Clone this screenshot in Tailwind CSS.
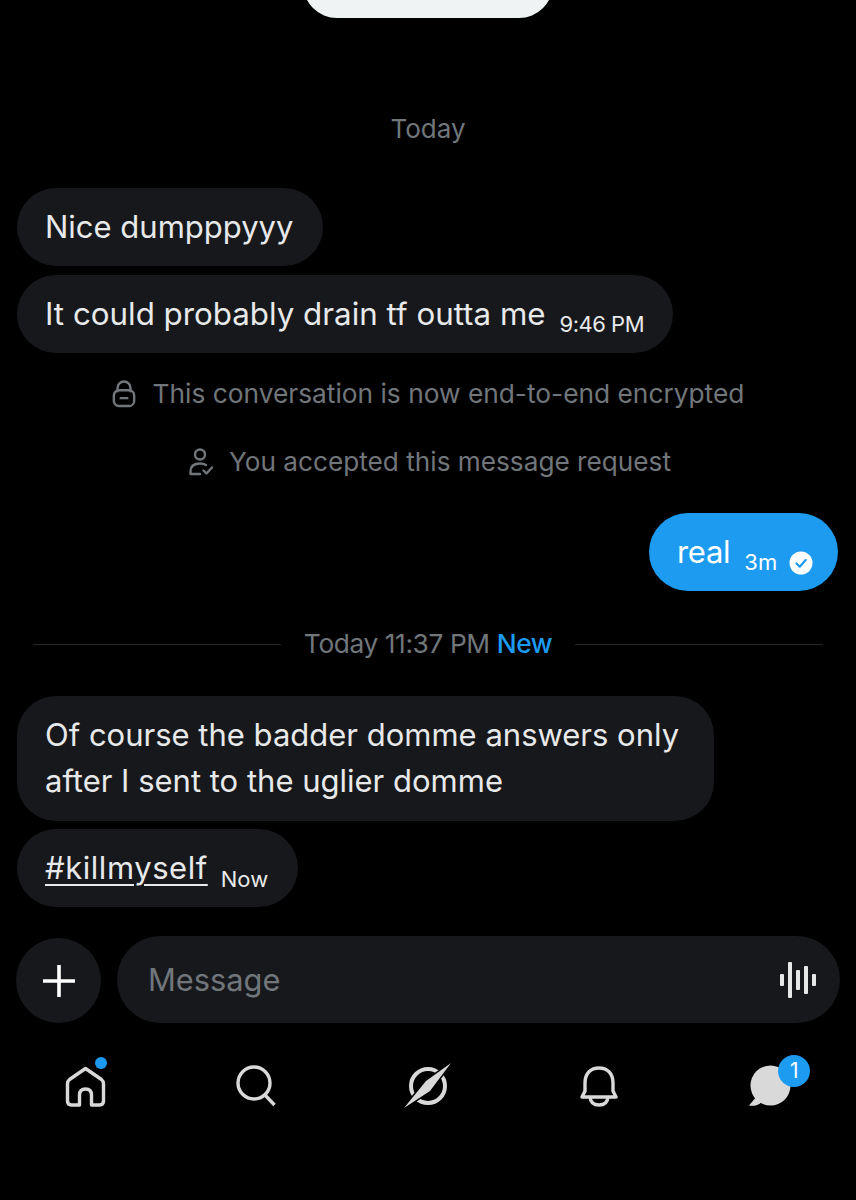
<!DOCTYPE html>
<html lang="en">
<head>
  <meta charset="UTF-8">
  <meta name="viewport" content="width=device-width, initial-scale=1.0">
  <title>Messages</title>
  <script src="https://cdn.jsdelivr.net/npm/@tailwindcss/browser@4"></script>
</head>
<body class="bg-black">
  <div class="w-[856px] h-[1200px] overflow-hidden flex flex-col font-['Inter','Liberation_Sans',sans-serif] text-[#e7e9ea]">
    <!-- Sheet peeking in at the top -->
    <div class="w-[250px] h-[60px] mt-[-42px] ml-[303px] shrink-0 bg-[#eff3f4] rounded-b-[34px]"></div>

    <!-- Conversation -->
    <div class="flex flex-col px-[17px] shrink-0">
      <p class="mt-[95px] h-[32px] leading-[32px] text-center text-[26px] text-[#71767b] mb-[-1px]">Today</p>

      <div class="mt-[44px] flex flex-col items-start gap-[9px]">
        <div class="h-[78px] w-[306px] flex items-center pl-[28px] pt-[1px] rounded-[39px] bg-[#17181b] text-[31px]">Nice dumpppyyy</div>
        <div class="h-[78px] w-[656px] flex items-center pl-[28px] pt-[1px] rounded-[39px] bg-[#17181b] text-[31.300px]">
          <span>It could probably drain tf outta me</span>
          <span class="ml-[14px] mt-[20px] text-[22px] tracking-[-0.5px] whitespace-nowrap">9:46 PM</span>
        </div>
      </div>

      <div class="mt-[24px] h-[34px] flex items-center justify-center gap-[17px] text-[26.300px] text-[#71767b]">
        <svg class="w-[24px] h-[28px]" viewBox="0 0 26 30" fill="none" stroke="#71767b" stroke-width="2.600" stroke-linecap="round">
          <path d="M6 12V8.500a7 7 0 0 1 14 0V12"/>
          <rect x="2" y="11" width="22" height="17" rx="5.500"/>
          <path d="M9.500 19.500h7"/>
        </svg>
        <span>This conversation is now end-to-end encrypted</span>
      </div>

      <div class="mt-[34px] h-[34px] flex items-center justify-center gap-[15px] ml-[3px] text-[26.200px] text-[#71767b]">
        <svg class="w-[26px] h-[30px]" viewBox="0 0 26 30" fill="none" stroke="#71767b" stroke-width="2.400" stroke-linecap="round" stroke-linejoin="round">
          <circle cx="12" cy="7.500" r="5"/>
          <path d="M2.500 27v-2.500C2.500 19 6.500 16.500 12 16.500c2.500 0 4.500.5 6 1.500M2.500 27H12"/>
          <path d="M15.500 23.500l3 3 5.500-6"/>
        </svg>
        <span>You accepted this message request</span>
      </div>

      <div class="mt-[34px] self-end mr-[1px] h-[78px] w-[189px] flex items-center pl-[28px] pt-[1px] rounded-[39px] bg-[#1d9bf0] text-white">
        <span class="text-[31px] tracking-[-0.3px]">real</span>
        <span class="ml-[14px] mt-[20px] text-[22px] tracking-[0.2px]">3m</span>
        <svg class="ml-[11px] mt-[21px] w-[24px] h-[24px]" viewBox="0 0 24 24">
          <circle cx="12" cy="12" r="11.500" fill="#fff"/>
          <path d="M7.500 12.500l3.200 3.200 6-6.700" fill="none" stroke="#1d9bf0" stroke-width="2.200" stroke-linecap="round" stroke-linejoin="round"/>
        </svg>
      </div>

      <div class="mt-[36px] h-[34px] flex items-center mx-[16px] gap-[23px]">
        <div class="flex-1 h-px bg-[#25282b]"></div>
        <p class="text-[26.300px] text-[#71767b] tracking-[-0.4px] whitespace-nowrap">Today 11:37 PM <span class="text-[#1d9bf0] font-medium">New</span></p>
        <div class="flex-1 h-px bg-[#25282b]"></div>
      </div>

      <div class="mt-[35px] flex flex-col items-start gap-[8px]">
        <div class="w-[697px] h-[125px] rounded-[39px] bg-[#17181b] pl-[28px] pt-[16px] text-[31px] leading-[46px]">Of course the badder domme answers only<br>after I sent to the uglier domme</div>
        <div class="h-[78px] w-[281px] flex items-center pl-[28px] rounded-[39px] bg-[#17181b]">
          <span class="text-[31px] tracking-[0.55px] underline underline-offset-[5px] decoration-2">#killmyself</span>
          <span class="ml-[13px] mt-[22px] text-[22px]">Now</span>
        </div>
      </div>
    </div>

    <!-- Composer -->
    <div class="mt-[29px] flex items-center pl-[16px] pr-[16px] gap-[16px] shrink-0">
      <button class="w-[85px] h-[85px] mt-[2px] shrink-0 rounded-full bg-[#17181b] flex items-center justify-center">
        <svg class="w-[32px] h-[32px]" viewBox="0 0 32 32" stroke="#fff" stroke-width="3.600">
          <path d="M0 16h32M16 0v32"/>
        </svg>
      </button>
      <div class="flex-1 h-[87px] rounded-[44px] bg-[#17181b] flex items-center justify-between pl-[31px] pr-[24px]">
        <span class="text-[30.800px] text-[#71767b] pt-[2px]">Message</span>
        <svg class="w-[36px] h-[36px]" viewBox="0 0 36 36" fill="#e7e7e7">
          <rect x="0" y="12" width="4" height="12" rx="1"/>
          <rect x="8" y="0" width="4" height="36" rx="1"/>
          <rect x="16" y="8" width="4" height="20" rx="1"/>
          <rect x="24" y="4" width="4" height="28" rx="1"/>
          <rect x="32" y="12" width="4" height="12" rx="1"/>
        </svg>
      </div>
    </div>

    <!-- Bottom nav -->
    <nav class="mt-[33px] grid grid-cols-5 h-[60px] shrink-0">
      <div class="flex items-center justify-center">
        <div class="relative w-[42px] h-[42px]">
          <svg class="w-[42px] h-[42px]" viewBox="0 0 42 42" fill="none" stroke="#d9d9d9" stroke-width="3.400" stroke-linejoin="round">
            <path d="M20.500 3.500 36.500 14.500Q38.500 16 38.500 19V36Q38.500 40 34.500 40H26.500V30Q26.500 24 20.500 24Q14.500 24 14.500 30V40H6.500Q2.500 40 2.500 36V19Q2.500 16 4.500 14.500Z"/>
          </svg>
          <span class="absolute top-[-8px] right-[0px] w-[12px] h-[12px] rounded-full bg-[#1d9bf0]"></span>
        </div>
      </div>
      <div class="flex items-center justify-center">
        <svg class="w-[42px] h-[42px]" viewBox="0 0 42 42" fill="none" stroke="#d9d9d9" stroke-width="3.400">
          <circle cx="18" cy="18" r="16"/>
          <path d="M28.500 29.500 38.500 40"/>
        </svg>
      </div>
      <div class="flex items-center justify-center">
        <svg class="w-[50px] h-[50px]" viewBox="0 0 50 50" fill="none">
          <circle cx="25" cy="25" r="17" stroke="#d9d9d9" stroke-width="4"/>
          <path d="M1 47 23 20 48 2 27 30Z" fill="#d9d9d9" stroke="#000" stroke-width="3" paint-order="stroke"/>
        </svg>
      </div>
      <div class="flex items-center justify-center">
        <svg class="w-[38px] h-[42px]" viewBox="0 0 38 42" fill="none" stroke="#d9d9d9" stroke-width="3.400" stroke-linejoin="round">
          <path d="M2 32 5 26V18C5 8 11 3 19 3S33 8 33 18V26L36 32Z"/>
          <path d="M10 32C10.500 37.500 14 40 19 40S27.500 37.500 28 32"/>
        </svg>
      </div>
      <div class="flex items-center justify-center">
        <div class="relative w-[44px] h-[42px]">
          <svg class="w-[44px] h-[42px]" viewBox="0 0 44 42" fill="#d9d9d9">
            <circle cx="22.500" cy="20.500" r="20"/>
            <path d="M9 31 1 40.500C5 41.500 10 40.500 14 37Z"/>
          </svg>
          <span class="absolute top-[-10px] left-[30px] w-[32px] h-[32px] rounded-full bg-[#1d9bf0] text-white text-[21px] leading-[32px] text-center">1</span>
        </div>
      </div>
    </nav>
  </div>
</body>
</html>
